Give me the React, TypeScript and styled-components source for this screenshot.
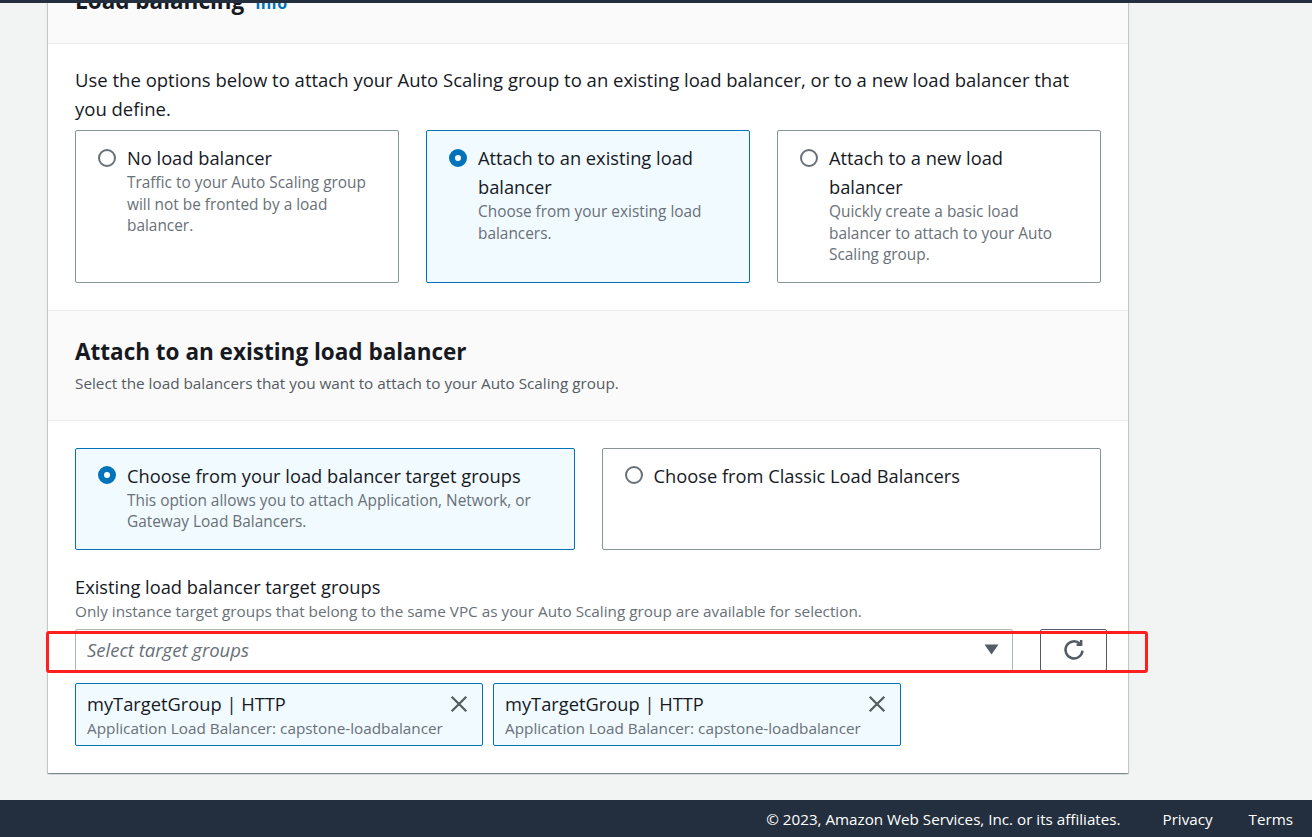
import React, { useState } from "react";
import styled, { createGlobalStyle } from "styled-components";

const GlobalStyle = createGlobalStyle`
  html, body {
    margin: 0;
    padding: 0;
    background: #f2f3f3;
    overflow: hidden;
  }
  body {
    font-family: "Open Sans", "Noto Sans", Arial, sans-serif;
    color: #16191f;
  }
  * { box-sizing: border-box; }
`;

const Screen = styled.div`
  height: 100vh;
  display: flex;
  flex-direction: column;
`;

const TopBar = styled.div`
  height: 3px;
  flex-shrink: 0;
  background: #232f3e;
`;

const Main = styled.main`
  flex: 1;
  overflow: hidden;
  padding-left: 48px;
`;

const Panel = styled.section`
  width: 1080px;
  margin-top: -35px;
  background: #fff;
  box-shadow: 0 1px 1px 0 rgba(0, 28, 36, 0.3), 1px 1px 1px 0 rgba(0, 28, 36, 0.15),
    -1px 1px 1px 0 rgba(0, 28, 36, 0.15);
`;

const SectionHeader = styled.header<{ $top?: boolean }>`
  background: #fafafa;
  border-bottom: 1px solid #eaeded;
  border-top: ${(p) => (p.$top ? "none" : "1px solid #eaeded")};
  padding: ${(p) => (p.$top ? "18px 27px 25px" : "26px 27px 26px")};
`;

const Heading = styled.h2`
  margin: 0;
  font-size: 22.5px;
  line-height: 30px;
  font-weight: 700;
  color: #16191f;
  display: flex;
  align-items: baseline;
  gap: 11px;
`;

const InfoLink = styled.a`
  font-size: 16px;
  font-weight: 700;
  color: #0073bb;
  text-decoration: none;
`;

const HeaderDesc = styled.p`
  margin: 5px 0 0;
  font-size: 15.3px;
  line-height: 22px;
  color: #545b64;
`;

const Body = styled.div<{ $top: number }>`
  padding: ${(p) => p.$top}px 27px 27px;
`;

const Lead = styled.p`
  margin: 0 0 7px;
  font-size: 18.5px;
  line-height: 29px;
`;

const TilesRow = styled.div<{ $cols: number }>`
  display: grid;
  grid-template-columns: repeat(${(p) => p.$cols}, 1fr);
  gap: 27px;
`;

const Tile = styled.label<{ $selected: boolean }>`
  display: flex;
  gap: 11px;
  align-items: flex-start;
  padding: 12px 20px 16px 22px;
  border: 1px solid ${(p) => (p.$selected ? "#0073bb" : "#879596")};
  border-radius: 2px;
  background: ${(p) => (p.$selected ? "#f1faff" : "#fff")};
  cursor: pointer;
`;

const Radio = styled.span<{ $checked: boolean }>`
  flex-shrink: 0;
  width: 18px;
  height: 18px;
  margin-top: 5.5px;
  border-radius: 50%;
  border: ${(p) => (p.$checked ? "6px solid #0073bb" : "2px solid #687078")};
  background: #fff;
`;

const TileText = styled.div`
  display: flex;
  flex-direction: column;
`;

const TileTitle = styled.span`
  font-size: 18.3px;
  line-height: 29px;
  color: #16191f;
`;

const TileDesc = styled.span`
  font-size: 15.4px;
  line-height: 21.5px;
  color: #687078;
`;

const Field = styled.div`
  margin-top: 25px;
`;

const FieldLabel = styled.div`
  font-size: 18.3px;
  line-height: 24px;
  color: #16191f;
`;

const FieldDesc = styled.div`
  font-size: 15.3px;
  line-height: 22px;
  color: #687078;
  margin: 1px 0 7px;
`;

const SelectRow = styled.div`
  position: relative;
  display: flex;
  align-items: stretch;
  width: 1032px;
`;

const SelectBox = styled.div`
  flex: 0 0 938px;
  height: 42px;
  display: flex;
  align-items: center;
  justify-content: space-between;
  padding: 0 13px 0 11px;
  border: 1px solid #aab7b8;
  border-radius: 2px;
  background: #fff;
`;

const Placeholder = styled.span`
  font-size: 18.5px;
  font-style: italic;
  color: #687078;
`;

const RefreshButton = styled.button`
  margin-left: 27px;
  width: 67px;
  height: 42px;
  display: flex;
  align-items: center;
  justify-content: center;
  border: 1px solid #545b64;
  border-radius: 2px;
  background: #fff;
  padding: 0;
  cursor: pointer;
`;

const Highlight = styled.div`
  position: absolute;
  left: -29px;
  right: -41px;
  top: 2px;
  bottom: -2px;
  border: 3px solid #ff1f1f;
  border-radius: 3px;
  pointer-events: none;
`;

const Tokens = styled.div`
  display: flex;
  gap: 10px;
  margin-top: 12px;
`;

const Token = styled.div`
  width: 408px;
  height: 63px;
  display: flex;
  justify-content: space-between;
  padding: 7px 12px 0 11px;
  border: 1px solid #0073bb;
  border-radius: 2px;
  background: #f1faff;
`;

const TokenText = styled.div`
  display: flex;
  flex-direction: column;
`;

const TokenTitle = styled.span`
  font-size: 18.3px;
  line-height: 26px;
  color: #16191f;
`;

const TokenDesc = styled.span`
  font-size: 15.3px;
  line-height: 22px;
  color: #687078;
`;

const Dismiss = styled.button`
  width: 22px;
  height: 22px;
  margin-top: 2px;
  padding: 0;
  border: none;
  background: none;
  display: flex;
  align-items: center;
  justify-content: center;
  cursor: pointer;
`;

const Footer = styled.footer`
  flex-shrink: 0;
  height: 37px;
  background: #232f3e;
  display: flex;
  align-items: center;
  justify-content: flex-end;
  gap: 36px;
  padding-right: 19px;
  font-size: 15.2px;
  color: #fff;
`;

const Copyright = styled.span`
  margin-right: 6px;
`;

const FooterLink = styled.a`
  color: #fff;
  text-decoration: none;
`;

const Caret = () => (
  <svg width="15" height="11" viewBox="0 0 15 11">
    <path d="M0.5 0.5h14L7.5 10.5z" fill="#545b64" />
  </svg>
);

const RefreshIcon = () => (
  <svg width="22" height="22" viewBox="0 0 16 16" fill="none" stroke="#545b64" strokeWidth="1.8">
    <path d="M14.2 8.5A6.2 6.2 0 1 1 12.3 3.4" />
    <path d="M13.2 0.8v3.3H9.9" strokeLinejoin="miter" />
  </svg>
);

const CloseIcon = () => (
  <svg width="18" height="18" viewBox="0 0 16 16" stroke="#545b64" strokeWidth="2">
    <path d="M1.5 1.5l13 13M14.5 1.5l-13 13" />
  </svg>
);

const balancerModes = [
  {
    id: "none",
    title: "No load balancer",
    desc: "Traffic to your Auto Scaling group will not be fronted by a load balancer.",
  },
  {
    id: "existing",
    title: "Attach to an existing load balancer",
    desc: "Choose from your existing load balancers.",
  },
  {
    id: "new",
    title: "Attach to a new load balancer",
    desc: "Quickly create a basic load balancer to attach to your Auto Scaling group.",
  },
];

const sources = [
  {
    id: "target",
    title: "Choose from your load balancer target groups",
    desc: "This option allows you to attach Application, Network, or Gateway Load Balancers.",
  },
  { id: "classic", title: "Choose from Classic Load Balancers", desc: "" },
];

export default function App() {
  const [mode, setMode] = useState("existing");
  const [source, setSource] = useState("target");
  const [groups, setGroups] = useState([1, 2]);

  return (
    <Screen>
      <GlobalStyle />
      <TopBar />
      <Main>
        <Panel>
          <SectionHeader $top>
            <Heading>
              Load balancing <InfoLink href="#">Info</InfoLink>
            </Heading>
          </SectionHeader>
          <Body $top={21}>
            <Lead>
              Use the options below to attach your Auto Scaling group to an existing load balancer, or to a new load
              balancer that you define.
            </Lead>
            <TilesRow $cols={3}>
              {balancerModes.map((m) => (
                <Tile key={m.id} $selected={mode === m.id} onClick={() => setMode(m.id)}>
                  <Radio $checked={mode === m.id} />
                  <TileText>
                    <TileTitle>{m.title}</TileTitle>
                    <TileDesc>{m.desc}</TileDesc>
                  </TileText>
                </Tile>
              ))}
            </TilesRow>
          </Body>

          <SectionHeader>
            <Heading>Attach to an existing load balancer</Heading>
            <HeaderDesc>Select the load balancers that you want to attach to your Auto Scaling group.</HeaderDesc>
          </SectionHeader>
          <Body $top={27}>
            <TilesRow $cols={2}>
              {sources.map((s) => (
                <Tile key={s.id} $selected={source === s.id} onClick={() => setSource(s.id)}>
                  <Radio $checked={source === s.id} />
                  <TileText>
                    <TileTitle>{s.title}</TileTitle>
                    {s.desc && <TileDesc>{s.desc}</TileDesc>}
                  </TileText>
                </Tile>
              ))}
            </TilesRow>

            <Field>
              <FieldLabel>Existing load balancer target groups</FieldLabel>
              <FieldDesc>
                Only instance target groups that belong to the same VPC as your Auto Scaling group are available for
                selection.
              </FieldDesc>
              <SelectRow>
                <SelectBox>
                  <Placeholder>Select target groups</Placeholder>
                  <Caret />
                </SelectBox>
                <RefreshButton aria-label="Refresh">
                  <RefreshIcon />
                </RefreshButton>
                <Highlight />
              </SelectRow>
              <Tokens>
                {groups.map((g) => (
                  <Token key={g}>
                    <TokenText>
                      <TokenTitle>myTargetGroup | HTTP</TokenTitle>
                      <TokenDesc>Application Load Balancer: capstone-loadbalancer</TokenDesc>
                    </TokenText>
                    <Dismiss onClick={() => setGroups(groups.filter((x) => x !== g))}>
                      <CloseIcon />
                    </Dismiss>
                  </Token>
                ))}
              </Tokens>
            </Field>
          </Body>
        </Panel>
      </Main>
      <Footer>
        <Copyright>© 2023, Amazon Web Services, Inc. or its affiliates.</Copyright>
        <FooterLink href="#">Privacy</FooterLink>
        <FooterLink href="#">Terms</FooterLink>
      </Footer>
    </Screen>
  );
}
